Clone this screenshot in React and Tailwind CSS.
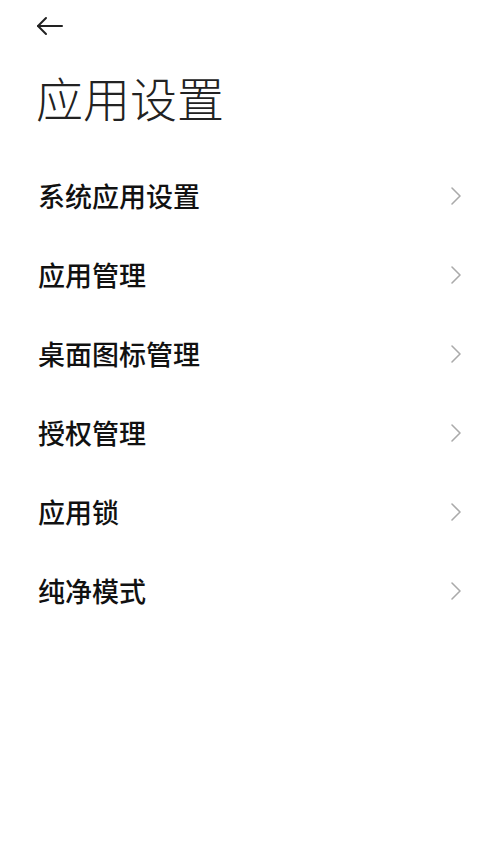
import React from "react";

const items = ["系统应用设置", "应用管理", "桌面图标管理", "授权管理", "应用锁", "纯净模式"];

export default function App() {
  return (
    <div
      className="w-[500px] h-[843px] bg-white text-[#1a1a1a]"
      style={{ fontFamily: '"Noto Sans CJK SC", "Noto Sans", sans-serif' }}
    >
      <div className="h-[52px] flex items-center pl-[36px]">
        <svg width="28" height="20" viewBox="0 0 28 20" fill="none" stroke="#222" strokeWidth="2" strokeLinecap="round" strokeLinejoin="round">
          <path d="M2 10H26" />
          <path d="M10 2L2 10L10 18" />
        </svg>
      </div>
      <div className="pl-[36px] pt-[17px] h-[104px] text-[47px] leading-[56px] font-light text-[#222]">应用设置</div>
      <div className="flex flex-col">
        {items.map((t) => (
          <div key={t} className="h-[79px] flex items-center justify-between pl-[38px] pr-[38px]">
            <span className="text-[27px] leading-[34px] font-medium text-[#111]">{t}</span>
            <svg width="12" height="20" viewBox="0 0 12 20" fill="none" stroke="#aaa" strokeWidth="1.6" strokeLinecap="round" strokeLinejoin="round">
              <path d="M2 2L10 10L2 18" />
            </svg>
          </div>
        ))}
      </div>
    </div>
  );
}
